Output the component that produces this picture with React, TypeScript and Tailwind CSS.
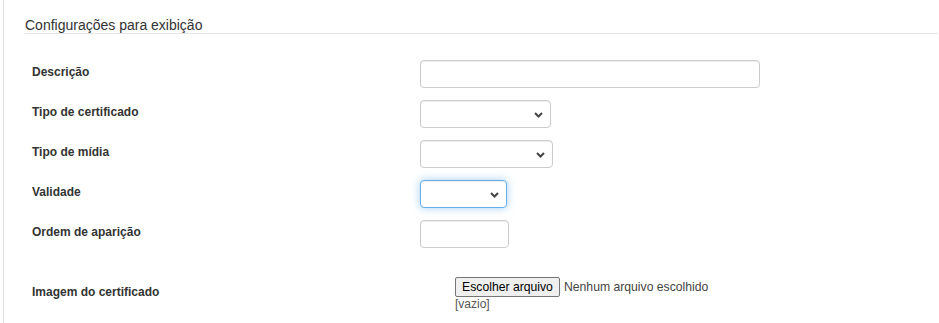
import { useState } from "react";

function Chevron() {
  return (
    <svg
      className="pointer-events-none absolute right-[8px] top-[12px]"
      width="9"
      height="6"
      viewBox="0 0 9 6"
      fill="none"
    >
      <path d="M1 1l3.5 3.5L8 1" stroke="#444" strokeWidth="2" />
    </svg>
  );
}

function Select({ width, focus }: { width: string; focus?: boolean }) {
  return (
    <div className={`relative ${width}`}>
      <select
        className={
          focus
            ? "h-[28px] w-full appearance-none rounded-[4px] border border-[#66afe9] bg-white shadow-[inset_0_1px_1px_rgba(0,0,0,0.075),0_0_8px_rgba(102,175,233,0.6)] outline-none"
            : "h-[28px] w-full appearance-none rounded-[4px] border border-[#ccc] bg-white shadow-[inset_0_1px_1px_rgba(0,0,0,0.075)] outline-none"
        }
        defaultValue=""
      >
        <option value=""></option>
      </select>
      <Chevron />
    </div>
  );
}

function Row({ label, children }: { label: string; children: React.ReactNode }) {
  return (
    <div className="flex items-start">
      <div className="w-[388px] pt-[4px] text-[12px] font-bold leading-4 text-[#333]">{label}</div>
      {children}
    </div>
  );
}

export default function App() {
  const [desc, setDesc] = useState("");
  const [ordem, setOrdem] = useState("");

  return (
    <div className="min-h-[323px] bg-white pl-[3px] font-['Liberation_Sans',Arial,sans-serif]">
      <div className="min-h-[323px] border-l border-[#dedede] pl-[21px] pr-px">
        <div className="border-b border-[#e5e5e5] pt-[17px] text-[14px] leading-4 text-[#333]">
          Configurações para exibição
        </div>

        <div className="flex flex-col gap-[12px] pl-[7px] pt-[26px]">
          <Row label="Descrição">
            <input
              className="h-[28px] w-[340px] rounded-[4px] border border-[#ccc] px-2 text-[12px] shadow-[inset_0_1px_1px_rgba(0,0,0,0.075)] outline-none"
              value={desc}
              onChange={(e) => setDesc(e.target.value)}
            />
          </Row>
          <Row label="Tipo de certificado">
            <Select width="w-[131px]" />
          </Row>
          <Row label="Tipo de mídia">
            <Select width="w-[133px]" />
          </Row>
          <Row label="Validade">
            <Select width="w-[87px]" focus />
          </Row>
          <Row label="Ordem de aparição">
            <input
              className="h-[28px] w-[89px] rounded-[4px] border border-[#ccc] px-2 text-[12px] shadow-[inset_0_1px_1px_rgba(0,0,0,0.075)] outline-none"
              value={ordem}
              onChange={(e) => setOrdem(e.target.value)}
            />
          </Row>
        </div>

        <div className="flex items-start pl-[7px] pt-[28px]">
          <div className="w-[388px] pt-[8px] text-[12px] font-bold leading-4 text-[#333]">
            Imagem do certificado
          </div>
          <div className="ml-[35px] pt-px">
            <div className="flex items-center">
              <button className="h-[20px] w-[105px] rounded-[2px] border border-[#767676] bg-[#efefef] text-[12.2px] leading-4 text-black">
                Escolher arquivo
              </button>
              <span className="ml-[4px] text-[12.2px] leading-4 text-[#444]">Nenhum arquivo escolhido</span>
            </div>
            <div className="text-[12px] leading-[14px] text-[#555]">[vazio]</div>
          </div>
        </div>
      </div>
    </div>
  );
}
